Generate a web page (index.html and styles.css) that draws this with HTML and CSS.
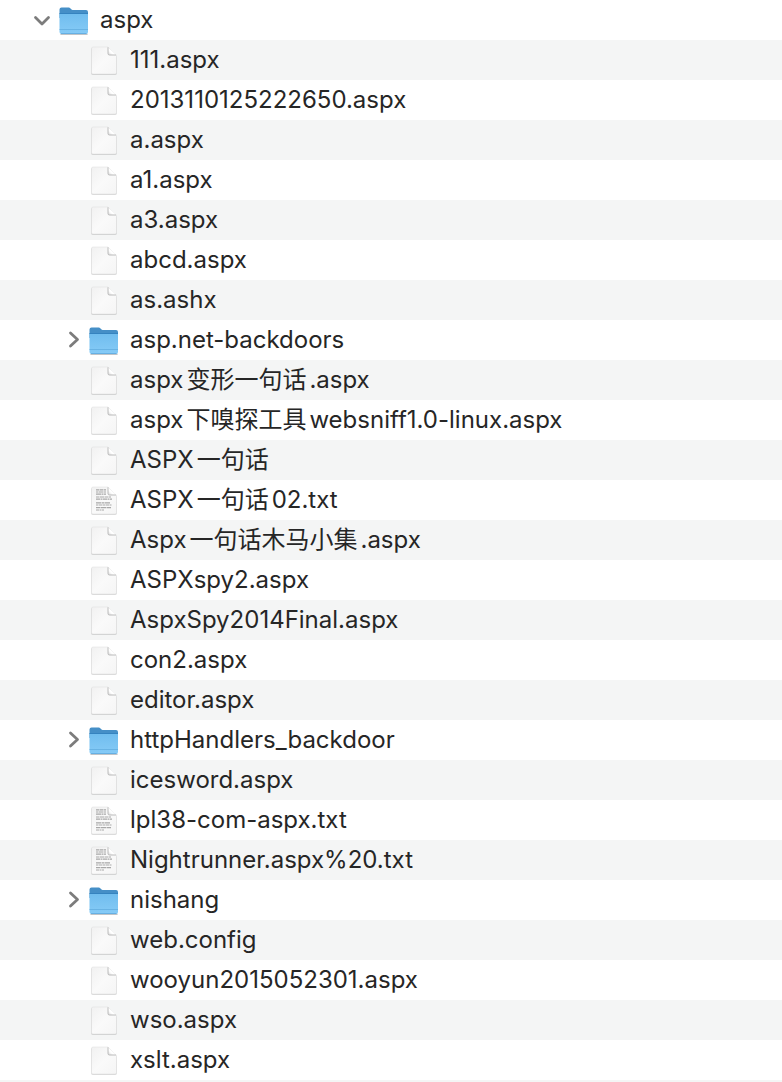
FILE: index.html
```
<!DOCTYPE html>
<html lang="zh-CN">
<head>
<meta charset="utf-8">
<meta name="viewport" content="width=device-width, initial-scale=1">
<title>aspx</title>
<link rel="stylesheet" href="styles.css">
</head>
<body>
<svg class="defs" width="0" height="0" aria-hidden="true">
  <defs>
    <linearGradient id="folder-front" x1="0" y1="0" x2="0" y2="1">
      <stop offset="0" stop-color="#70bdee"/><stop offset="1" stop-color="#86cbf7"/>
    </linearGradient>
    <linearGradient id="page-fill" x1="0" y1="0" x2="1" y2="1">
      <stop offset="0" stop-color="#f1f1f1"/><stop offset="0.5" stop-color="#fafafa"/><stop offset="1" stop-color="#f5f5f5"/>
    </linearGradient>
    <linearGradient id="fold-fill" x1="0" y1="1" x2="1" y2="0">
      <stop offset="0" stop-color="#d4d4d4"/><stop offset="0.35" stop-color="#ffffff"/><stop offset="1" stop-color="#ffffff"/>
    </linearGradient>
    <symbol id="folder" viewBox="0 0 32 32">
      <path d="M3 30.300h26" stroke="#000" stroke-opacity=".22" stroke-width="1.600" stroke-linecap="round"/>
      <path d="M1.500 5.500a2 2 0 0 1 2-2h7.500c1.500 0 2 2.500 3.500 2.500h13.500a2 2 0 0 1 2 2V14H1.500z" fill="#458fc7"/>
      <path d="M1.500 10.500a1 1 0 0 1 1-1h26.500a1 1 0 0 1 1 1V28a2 2 0 0 1-2 2h-24.500a2 2 0 0 1-2-2z" fill="url(#folder-front)"/>
      <path d="M1.500 9.500h28.500" stroke="#3583bf" stroke-width="1"/>
      <path d="M1.500 25.500h28.500" stroke="#62addf" stroke-width=".8"/>
      <path d="M3 29.600h25.500" stroke="#5ba6da" stroke-width=".8"/>
    </symbol>
    <symbol id="page" viewBox="0 0 32 32">
      <path d="M5 4h15.500l8.500 9v16.500a1.500 1.500 0 0 1-1.500 1.500h-23A1.500 1.500 0 0 1 3 29.500V5.500A1.500 1.500 0 0 1 5 4z" fill="#000" fill-opacity=".08"/>
      <path d="M5 3.500h15.500l8 9v16.500a1.500 1.500 0 0 1-1.500 1.500h-22A1.500 1.500 0 0 1 3.500 29V5A1.500 1.500 0 0 1 5 3.500z" fill="#000" fill-opacity=".14"/>
      <path d="M5 3h15l8.500 8.500V28.500a1.500 1.500 0 0 1-1.500 1.500h-22A1.500 1.500 0 0 1 3.500 28.500V4.500A1.500 1.500 0 0 1 5 3z" fill="url(#page-fill)" stroke="#dedede" stroke-width=".5"/>
      <path d="M20 3.300v6.200a1.500 1.500 0 0 0 1.500 1.500h6.600z" fill="url(#fold-fill)"/>
      <path d="M20 3.300v6.200a1.500 1.500 0 0 0 1.500 1.500h6.600" fill="none" stroke="#b4b4b4" stroke-width=".9"/>
    </symbol>
    <symbol id="text-page" viewBox="0 0 32 32">
      <use href="#page"/>
      <g stroke="#a8a8a8" stroke-width="1.200" fill="none">
        <path d="M8 5.800h10" stroke-dasharray="3 .5 4 .5"/>
        <path d="M8 8h10" stroke-dasharray="2 .5 5 .5"/>
        <path d="M8 10.200h10" stroke-dasharray="5 .5 2 .5"/>
        <path d="M8 13h15" stroke-dasharray="3 .5 5 .5"/>
        <path d="M8 15.200h16" stroke-dasharray="4 .5 2 .5"/>
        <path d="M8 18.800h14" stroke-dasharray="5 .5 3 .5"/>
        <path d="M8 21h15.500" stroke-dasharray="2 .5 4 .5"/>
        <path d="M8 23.600h15" stroke-dasharray="4 .5 6 .5"/>
        <path d="M8 26h8" stroke-dasharray="3 .5 2 .5"/>
      </g>
    </symbol>
    <symbol id="chevron" viewBox="0 0 20 20">
      <path d="M6.500 3l7 6.500L6.500 16" fill="none" stroke="#7c7c7c" stroke-width="2.800" stroke-linecap="round" stroke-linejoin="round"/>
    </symbol>
    <symbol id="chevron-down" viewBox="0 0 20 20">
      <path d="M3.500 7.500l6.500 6.500L16.500 7.500" fill="none" stroke="#7c7c7c" stroke-width="2.800" stroke-linecap="round" stroke-linejoin="round"/>
    </symbol>
  </defs>
</svg>
<main class="browser">
  <div class="row root"><button class="toggle" aria-label="aspx" aria-expanded="true"><svg><use href="#chevron-down"/></svg></button><svg class="icon"><use href="#folder"/></svg><span class="name">aspx</span></div>
  <ul class="children">
    <li class="row"><svg class="icon"><use href="#page"/></svg><span class="name">111.aspx</span></li>
    <li class="row"><svg class="icon"><use href="#page"/></svg><span class="name">2013110125222650.aspx</span></li>
    <li class="row"><svg class="icon"><use href="#page"/></svg><span class="name">a.aspx</span></li>
    <li class="row"><svg class="icon"><use href="#page"/></svg><span class="name">a1.aspx</span></li>
    <li class="row"><svg class="icon"><use href="#page"/></svg><span class="name">a3.aspx</span></li>
    <li class="row"><svg class="icon"><use href="#page"/></svg><span class="name">abcd.aspx</span></li>
    <li class="row"><svg class="icon"><use href="#page"/></svg><span class="name">as.ashx</span></li>
    <li class="row"><button class="toggle" aria-label="asp.net-backdoors" aria-expanded="false"><svg><use href="#chevron"/></svg></button><svg class="icon"><use href="#folder"/></svg><span class="name">asp.net-backdoors</span></li>
    <li class="row"><svg class="icon"><use href="#page"/></svg><span class="name">aspx变形一句话.aspx</span></li>
    <li class="row"><svg class="icon"><use href="#page"/></svg><span class="name">aspx下嗅探工具websniff1.0-linux.aspx</span></li>
    <li class="row"><svg class="icon"><use href="#page"/></svg><span class="name">ASPX一句话</span></li>
    <li class="row"><svg class="icon"><use href="#text-page"/></svg><span class="name">ASPX一句话02.txt</span></li>
    <li class="row"><svg class="icon"><use href="#page"/></svg><span class="name">Aspx一句话木马小集.aspx</span></li>
    <li class="row"><svg class="icon"><use href="#page"/></svg><span class="name">ASPXspy2.aspx</span></li>
    <li class="row"><svg class="icon"><use href="#page"/></svg><span class="name">AspxSpy2014Final.aspx</span></li>
    <li class="row"><svg class="icon"><use href="#page"/></svg><span class="name">con2.aspx</span></li>
    <li class="row"><svg class="icon"><use href="#page"/></svg><span class="name">editor.aspx</span></li>
    <li class="row"><button class="toggle" aria-label="httpHandlers_backdoor" aria-expanded="false"><svg><use href="#chevron"/></svg></button><svg class="icon"><use href="#folder"/></svg><span class="name">httpHandlers_backdoor</span></li>
    <li class="row"><svg class="icon"><use href="#page"/></svg><span class="name">icesword.aspx</span></li>
    <li class="row"><svg class="icon"><use href="#text-page"/></svg><span class="name">lpl38-com-aspx.txt</span></li>
    <li class="row"><svg class="icon"><use href="#text-page"/></svg><span class="name">Nightrunner.aspx%20.txt</span></li>
    <li class="row"><button class="toggle" aria-label="nishang" aria-expanded="false"><svg><use href="#chevron"/></svg></button><svg class="icon"><use href="#folder"/></svg><span class="name">nishang</span></li>
    <li class="row"><svg class="icon"><use href="#page"/></svg><span class="name">web.config</span></li>
    <li class="row"><svg class="icon"><use href="#page"/></svg><span class="name">wooyun2015052301.aspx</span></li>
    <li class="row"><svg class="icon"><use href="#page"/></svg><span class="name">wso.aspx</span></li>
    <li class="row"><svg class="icon"><use href="#page"/></svg><span class="name">xslt.aspx</span></li>
  </ul>
  <div class="filler"></div>
</main>
</body>
</html>
```
FILE: styles.css
```
body {
  margin: 0;
  background: #fff;
  color: #262626;
  font-family: Inter, "Noto Sans CJK SC", sans-serif;
  font-size: 24px;
  line-height: 40px;
}

.defs {
  display: block;
}

.browser {
  display: flex;
  flex-direction: column;
  min-height: 100vh;
}

.children {
  list-style: none;
  margin: 0;
  padding: 0;
}

.row {
  display: grid;
  grid-template-columns: 20px 32px 1fr;
  column-gap: 4px;
  align-items: center;
  height: 40px;
  padding-left: 64px;
}

.root {
  padding-left: 34px;
}

.children .row:nth-child(odd),
.filler {
  background: #f4f5f5;
}

.filler {
  flex: 1;
}

.toggle {
  grid-column: 1;
  display: flex;
  width: 20px;
  height: 20px;
  padding: 0;
  border: 0;
  background: none;
}

.root .toggle {
  justify-self: center;
  margin-right: 4px;
}

.toggle svg {
  width: 20px;
  height: 20px;
}

.icon {
  grid-column: 2;
  width: 32px;
  height: 32px;
}

.name {
  grid-column: 3;
  padding-left: 6px;
  white-space: nowrap;
  text-autospace: normal;
}
```
